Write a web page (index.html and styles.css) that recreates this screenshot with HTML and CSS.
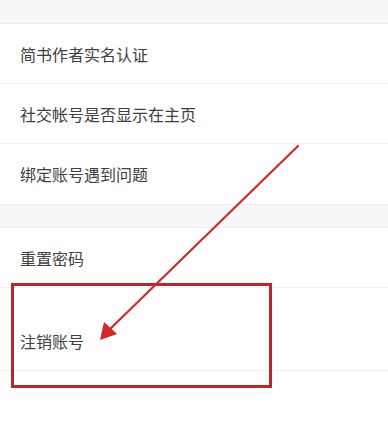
FILE: index.html
```html
<!DOCTYPE html>
<html>

<head>
    <meta charset="utf-8" />
    <title>账号设置</title>
    <meta name="viewport" content="width=device-width, initial-scale=1.0">
    <link rel="stylesheet" href="styles.css">
</head>

<body>
    <div class="main">
        <div class="section-gap top-gap"></div>
        <!-- Account group -->
        <div class="list">
            <div class="row">简书作者实名认证</div>
            <div class="row">社交帐号是否显示在主页</div>
            <div class="row last">绑定账号遇到问题</div>
        </div>
        <div class="section-gap"></div>
        <!-- Security group -->
        <div class="list">
            <div class="row">重置密码</div>
            <div class="row tall">注销账号</div>
        </div>

        <!-- Annotation overlay -->
        <div class="mark-box"></div>
        <svg class="arrow" width="388" height="426" viewBox="0 0 388 426">
            <line x1="298" y1="146" x2="108" y2="331" stroke="#d1282b" stroke-width="2.2" stroke-linecap="round" />
            <polygon points="100,340 104,322 117,334" fill="#d1282b" />
        </svg>
    </div>
</body>

</html>
```

FILE: styles.css
```css
* {
    padding: 0;
    margin: 0;
    box-sizing: border-box;
}

body {
    background-color: white;
    font-family: "Noto Sans CJK SC", "Noto Sans", sans-serif;
}

.main {
    position: relative;
    width: 388px;
    height: 426px;
    overflow: hidden;
}

.section-gap {
    height: 23px;
    background-color: #f8f8f8;
    border-top: 1px solid #efefef;
}

.top-gap {
    border-top: none;
}

.list {
    border-top: 1px solid #efefef;
}

.row {
    display: flex;
    align-items: center;
    height: 60px;
    padding-left: 20px;
    font-size: 16px;
    color: #404040;
    border-bottom: 1px solid #f0f0f0;
}

.row.last {
    border-bottom: none;
}

.tall {
    height: 83px;
    padding-top: 24px;
}

/* red highlight frame */
.mark-box {
    position: absolute;
    left: 11px;
    top: 283px;
    width: 261px;
    height: 105px;
    border: 3px solid #b9262c;
}

.arrow {
    position: absolute;
    left: 0;
    top: 0;
}
```
